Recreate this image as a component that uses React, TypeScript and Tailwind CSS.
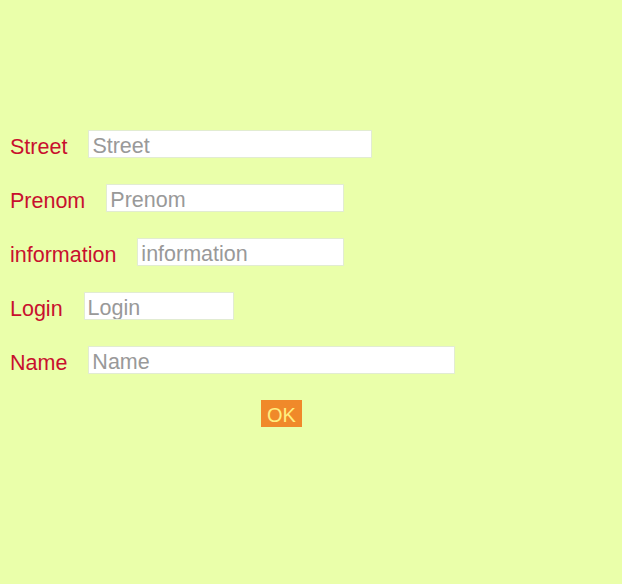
const FIELDS = [
  { label: 'Street', width: 'w-[284px]' },
  { label: 'Prenom', width: 'w-[238px]' },
  { label: 'information', width: 'w-[207px]' },
  { label: 'Login', width: 'w-[150px]' },
  { label: 'Name', width: 'w-[367px]' },
]

export default function App() {
  return (
    <div className="min-h-[584px] w-full bg-[#eaffaa] pt-[130px] pl-[10px] font-['Liberation_Sans',Arial,sans-serif]">
      <div className="flex flex-col gap-[26px]">
        {FIELDS.map((f) => (
          <div key={f.label} className="flex items-center h-[28px]">
            <span className="mt-[8px] text-[21.5px] leading-none text-[#c8102e]">{f.label}</span>
            <input
              type="text"
              placeholder={f.label}
              className={`${f.width} ml-[21px] h-[28px] bg-white border border-[#e2ecd2] px-[3px] pt-[4px] text-[21.5px] text-gray-700 placeholder:text-[#999999] outline-none`}
            />
          </div>
        ))}
        <div className="flex h-[27px]">
          <button className="ml-[251px] w-[41px] h-[27px] bg-[#f0892a] text-[20px] leading-none pt-[2px] text-[#ffee80]">
            OK
          </button>
        </div>
      </div>
    </div>
  )
}
